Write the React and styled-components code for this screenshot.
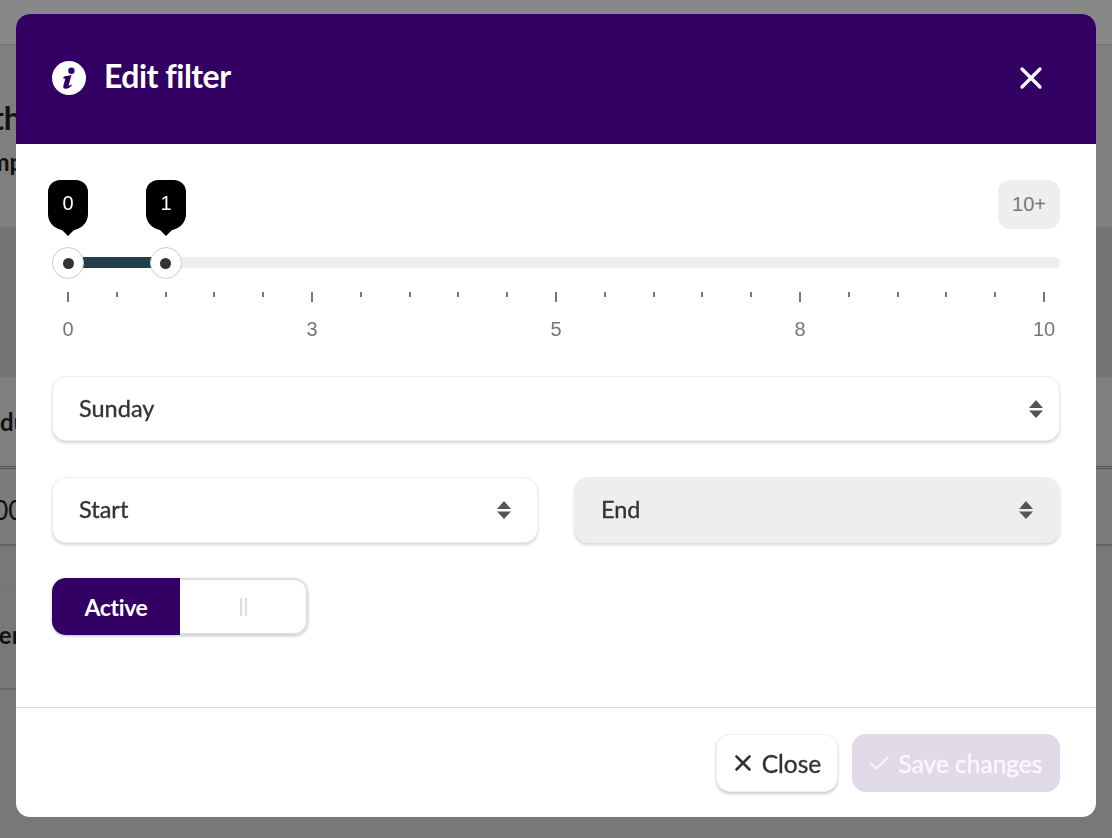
import React from "react";
import styled, { createGlobalStyle } from "styled-components";
import { FiX, FiCheck } from "react-icons/fi";

const PURPLE = "#310062";

const GlobalStyle = createGlobalStyle`
  html, body {
    margin: 0;
    padding: 0;
    height: 100%;
    background: #f2f2f2;
    font-family: "Lato", "Open Sans", sans-serif;
  }
`;

const Page = styled.div`
  height: 838px;
  overflow: hidden;
`;

const PageRow = styled.div`
  height: ${(p) => p.$height}px;
  background: ${(p) => p.$bg};
  border-bottom: ${(p) => p.$line || "1px solid #d4d4d4"};
  box-sizing: border-box;
  overflow: hidden;
  color: #222;
  white-space: nowrap;
`;

const PageCard = styled.div`
  width: 50%;
  height: 100px;
  margin-top: 44px;
  box-sizing: border-box;
  overflow: hidden;
  background: #dcdcdc;
  border-top: 1px solid #d0d0d0;
  border-bottom: 2px solid #c0c0c0;
`;

const PageText = styled.div`
  margin-left: ${(p) => p.$shift}px;
  padding-top: ${(p) => p.$top}px;
  font-size: ${(p) => p.$size}px;
  line-height: 1.2;
  font-weight: ${(p) => p.$weight || 700};
`;

const Backdrop = styled.div`
  position: fixed;
  inset: 0;
  background: rgba(0, 0, 0, 0.45);
`;

const Modal = styled.div`
  position: fixed;
  left: 16px;
  top: 14px;
  width: 1080px;
  height: 803px;
  display: flex;
  flex-direction: column;
  background: #fff;
  border-radius: 14px;
  overflow: hidden;
`;

const Header = styled.header`
  height: 130px;
  flex: none;
  box-sizing: border-box;
  padding: 0 47px 2px 36px;
  display: flex;
  align-items: center;
  gap: 18px;
  background: ${PURPLE};
  color: #fff;
`;

const Title = styled.h2`
  flex: 1;
  margin: 0;
  padding-bottom: 5px;
  font-size: 32px;
  font-weight: 700;
  letter-spacing: -0.5px;
`;

const CloseX = styled.button`
  padding: 0;
  border: 0;
  display: flex;
  background: transparent;
  color: #fff;
  svg {
    width: 36px;
    height: 36px;
    stroke-width: 2.2;
  }
`;

const Body = styled.div`
  flex: 1;
  padding: 36px 36px 0;
`;

const SliderHead = styled.div`
  position: relative;
  height: 49px;
  display: flex;
  justify-content: flex-end;
`;

const MaxBadge = styled.div`
  width: 62px;
  height: 49px;
  display: flex;
  align-items: center;
  justify-content: center;
  background: #eee;
  border-radius: 12px;
  color: #777;
  font: 20px "Liberation Sans", Arial, sans-serif;
`;

const Pin = styled.div`
  position: absolute;
  top: 0;
  left: ${(p) => p.$left}px;
  width: 40px;
  height: 50px;
  display: flex;
  align-items: center;
  justify-content: center;
  padding-bottom: 3px;
  box-sizing: border-box;
  background: #000;
  border-radius: 12px 12px 16px 16px;
  color: #fff;
  font: 20px "Liberation Sans", Arial, sans-serif;

  &::after {
    content: "";
    position: absolute;
    left: 13px;
    bottom: -6px;
    border-left: 7px solid transparent;
    border-right: 7px solid transparent;
    border-top: 7px solid #000;
  }
`;

const Track = styled.div`
  position: relative;
  height: 11px;
  margin-top: 28px;
  background: #eee;
  border-radius: 6px;
`;

const TrackFill = styled.div`
  position: absolute;
  left: 16px;
  top: 0;
  bottom: 0;
  width: 98px;
  background: #233f4c;
`;

const Handle = styled.div`
  position: absolute;
  top: -10px;
  left: ${(p) => p.$left}px;
  width: 32px;
  height: 32px;
  box-sizing: border-box;
  display: flex;
  align-items: center;
  justify-content: center;
  background: #fff;
  border: 1px solid #ccc;
  border-radius: 50%;

  &::after {
    content: "";
    width: 11px;
    height: 11px;
    border-radius: 50%;
    background: #333;
  }
`;

const Ticks = styled.div`
  display: flex;
  justify-content: space-between;
  margin: 24px 15px 0;
  height: 10px;
`;

const Tick = styled.i`
  display: block;
  width: 2px;
  height: ${(p) => (p.$major ? 10 : 5)}px;
  background: #777;
`;

const Labels = styled.div`
  display: flex;
  justify-content: space-between;
  margin: 16px 15px 0;
`;

const Label = styled.span`
  width: 2px;
  display: flex;
  justify-content: center;
  color: #777;
  font: 20px/23px "Liberation Sans", Arial, sans-serif;
`;

const Select = styled.div`
  height: ${(p) => p.$height || 65}px;
  flex: 1;
  box-sizing: border-box;
  padding: 0 ${(p) => p.$arrowGap || 16}px 0 26px;
  display: flex;
  align-items: center;
  justify-content: space-between;
  background: ${(p) => (p.$disabled ? "#eee" : "#fff")};
  border: 1px solid #eee;
  border-radius: 14px;
  box-shadow: 0 2px 3px rgba(0, 0, 0, 0.16);
  color: #333;
  font-size: 23.5px;
  font-weight: 400;
  -webkit-text-stroke: 0.35px #333;
`;

const SelectText = styled.span`
  margin-top: -2px;
`;

const DayRow = styled.div`
  display: flex;
  margin-top: 35px;
`;

const TimeRow = styled.div`
  display: flex;
  gap: 36px;
  margin-top: 36px;
`;

const Toggle = styled.div`
  width: 256px;
  height: 57px;
  margin-top: 35px;
  display: flex;
  border-radius: 14px;
  box-shadow: 0 1px 3px rgba(0, 0, 0, 0.25);
  overflow: hidden;
`;

const ToggleOn = styled.div`
  width: 128px;
  display: flex;
  align-items: center;
  justify-content: center;
  background: ${PURPLE};
  color: #fff;
  font-size: 23px;
  font-weight: 700;
  letter-spacing: -0.4px;
`;

const ToggleOff = styled.div`
  flex: 1;
  display: flex;
  align-items: center;
  justify-content: center;
  gap: 3px;
  box-sizing: border-box;
  background: #fff;
  border: 2px solid #ddd;
  border-left: 0;
  border-radius: 0 14px 14px 0;

  &::before,
  &::after {
    content: "";
    width: 2px;
    height: 18px;
    background: #ddd;
  }
`;

const Footer = styled.footer`
  height: 110px;
  flex: none;
  box-sizing: border-box;
  padding: 26px 36px 0;
  display: flex;
  justify-content: flex-end;
  gap: 14px;
  border-top: 1px solid #ddd;
`;

const Button = styled.button`
  height: 58px;
  width: ${(p) => p.$width}px;
  padding: 0 ${(p) => (p.$primary ? 3 : 3)}px 0 0;
  display: flex;
  align-items: center;
  justify-content: center;
  gap: ${(p) => (p.$primary ? 7 : 6)}px;
  border-radius: 14px;
  font-family: inherit;
  font-size: 24.5px;
  font-weight: 400;
  -webkit-text-stroke: ${(p) => (p.$primary ? 0.5 : 0.35)}px currentColor;
  border: ${(p) => (p.$primary ? "0" : "1px solid #eee")};
  background: ${(p) => (p.$primary ? "#e0dae8" : "#fff")};
  color: ${(p) => (p.$primary ? "#f9f7fb" : "#333")};
  box-shadow: ${(p) => (p.$primary ? "none" : "0 2px 3px rgba(0, 0, 0, 0.2)")};
  svg {
    width: ${(p) => (p.$primary ? 25 : 26)}px;
    height: ${(p) => (p.$primary ? 25 : 26)}px;
    stroke-width: ${(p) => (p.$primary ? 2 : 2.4)};
    -webkit-text-stroke: 0;
  }
`;

function InfoIcon() {
  return (
    <svg width="34" height="34" viewBox="0 0 34 34" style={{ flex: "none" }}>
      <circle cx="17" cy="17" r="17" fill="#fff" />
      <circle cx="19.4" cy="9.8" r="3.2" fill={PURPLE} />
      <path
        d="M12 15.500L19.500 14l-2.800 10c-.2.8.4 1 1 .6l1.500-1.100.7.8c-1.800 2.200-3.700 3.500-6 3.500-2.200 0-3.100-1.200-2.500-3.300l1.700-6c.2-.9-.5-1-2.200-.9z"
        fill={PURPLE}
      />
    </svg>
  );
}

function SortIcon() {
  return (
    <svg width="14" height="18" viewBox="0 0 14 18">
      <path d="M7 0l7 8H0zM0 10.500h14l-7 7.500z" fill="#555" />
    </svg>
  );
}

const MAJOR = [0, 5, 10, 15, 20];

export default function App() {
  return (
    <>
      <GlobalStyle />
      <Page>
        <PageRow $height={45} $bg="#f7f7f7" />
        <PageRow $height={183} $bg="#e8e8e8">
          <PageText $shift={-74} $top={54} $size={32}>Month</PageText>
          <PageText $shift={-40} $top={11} $size={24}>Company</PageText>
        </PageRow>
        <PageRow $height={149} $bg="#d6d6d6" $line="0" />
        <PageRow $height={92} $bg="#e8e8e8" $line="3px double #999">
          <PageText $shift={-37} $top={31} $size={24}>Product</PageText>
        </PageRow>
        <PageRow $height={77} $bg="#e2e2e2" $line="2px solid #b8b8b8">
          <PageText $shift={-37} $top={26} $size={26} $weight={400}>1000</PageText>
        </PageRow>
        <PageRow $height={292} $bg="#dadada" $line="0">
          <PageCard>
            <PageText $shift={-43} $top={30} $size={24}>Other</PageText>
          </PageCard>
        </PageRow>
      </Page>
      <Backdrop />
      <Modal>
        <Header>
          <InfoIcon />
          <Title>Edit filter</Title>
          <CloseX>
            <FiX />
          </CloseX>
        </Header>
        <Body>
          <SliderHead>
            <Pin $left={-4}>0</Pin>
            <Pin $left={94}>1</Pin>
            <MaxBadge>10+</MaxBadge>
          </SliderHead>
          <Track>
            <TrackFill />
            <Handle $left={0} />
            <Handle $left={97.5} />
          </Track>
          <Ticks>
            {Array.from({ length: 21 }, (_, i) => (
              <Tick key={i} $major={MAJOR.includes(i)} />
            ))}
          </Ticks>
          <Labels>
            {["0", "3", "5", "8", "10"].map((l) => (
              <Label key={l}>{l}</Label>
            ))}
          </Labels>
          <DayRow>
            <Select>
              <SelectText>Sunday</SelectText>
              <SortIcon />
            </Select>
          </DayRow>
          <TimeRow>
            <Select $height={66} $arrowGap={26}>
              <SelectText>Start</SelectText>
              <SortIcon />
            </Select>
            <Select $height={66} $arrowGap={26} $disabled>
              <SelectText>End</SelectText>
              <SortIcon />
            </Select>
          </TimeRow>
          <Toggle>
            <ToggleOn>Active</ToggleOn>
            <ToggleOff />
          </Toggle>
        </Body>
        <Footer>
          <Button $width={122}>
            <FiX />
            Close
          </Button>
          <Button $width={208} $primary>
            <FiCheck />
            Save changes
          </Button>
        </Footer>
      </Modal>
    </>
  );
}
